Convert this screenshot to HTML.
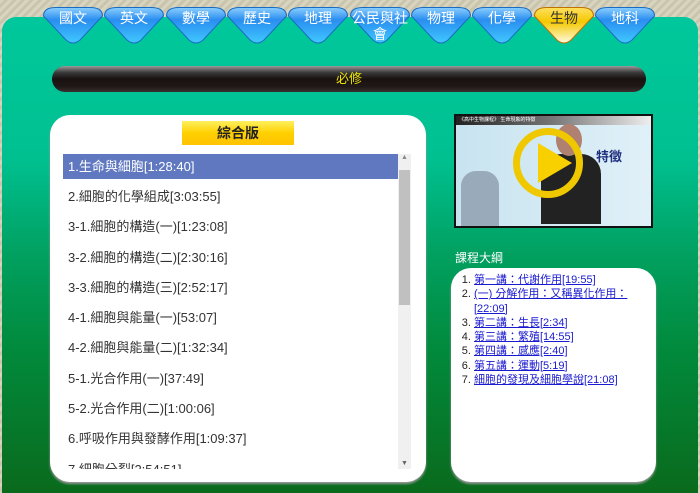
<!DOCTYPE html>
<html><head><meta charset="utf-8"><style>
*{margin:0;padding:0;box-sizing:border-box}
body{width:700px;height:493px;overflow:hidden;position:relative;font-family:"Liberation Sans","Noto Sans CJK TC",sans-serif;background:repeating-linear-gradient(135deg,#d8d4c0 0 3px,#c9c5ad 3px 6px)}
#g{position:absolute;left:2px;top:17px;width:696px;height:476px;border-radius:14px 14px 0 0;background:linear-gradient(180deg,#00c89c 0%,#00c090 30%,#01a060 50%,#018a3c 70%,#0a6a1c 100%)}
.tab{position:absolute;top:6px;width:62px;height:40px;color:#fff;font-size:14px;text-align:center;line-height:16px}
.tab svg{position:absolute;left:0;top:0}
.tab span{position:relative;display:block;padding-top:4px}
.tab.on{color:#333}
#bar{position:absolute;left:52px;top:66px;width:594px;height:26px;border-radius:13px;background:linear-gradient(#9a9a9a,#3a3a3a 25%,#1a1010 50%,#201818 80%,#3a3030);color:#e8e000;font-size:13px;text-align:center;line-height:26px}
#lp{position:absolute;left:50px;top:115px;width:376px;height:367px;background:#fff;border-radius:20px;box-shadow:0 2px 2px #999}
#ttl{position:absolute;left:182px;top:121px;width:112px;height:24px;background:linear-gradient(#fff060,#ffd000 50%,#ffc400);text-align:center;font-weight:bold;font-size:14px;line-height:24px;color:#222}
#list{position:absolute;left:63px;top:154px;width:348px;height:315px;overflow:hidden;background:#fff}
.it{height:30.3px;line-height:26px;padding-left:5px;font-size:13px;color:#333}
.it.s{background:#6078c0;color:#fff;height:25px;line-height:25px;margin-bottom:5px}
#sb{position:absolute;left:398px;top:154px;width:13px;height:315px;background:#f0f0f0}
#th{position:absolute;left:399px;top:170px;width:11px;height:135px;background:#c0c0c0}
#vid{position:absolute;left:454px;top:114px;width:199px;height:114px;background:#111;padding:2px}
#vi{width:100%;height:100%;background:linear-gradient(90deg,#c8e4f0,#e0f0f8);position:relative;overflow:hidden}
#rb{position:absolute;left:451px;top:268px;width:205px;height:214px;background:#fff;border-radius:20px;box-shadow:0 2px 2px #999}
ol{position:absolute;left:474px;top:273px;width:180px;font-size:11px;line-height:14.3px;color:#222}
ol a{color:#1a1ad0;text-decoration:underline}
</style></head><body>
<svg width="0" height="0" style="position:absolute"><defs>
<linearGradient id="bl" x1="0" y1="0" x2="0" y2="1"><stop offset="0" stop-color="#8ccfff"/><stop offset=".35" stop-color="#2a8ef0"/><stop offset="1" stop-color="#40c8ff"/></linearGradient>
<linearGradient id="yl" x1="0" y1="0" x2="0" y2="1"><stop offset="0" stop-color="#ffe060"/><stop offset=".4" stop-color="#f4c800"/><stop offset="1" stop-color="#fffbe0"/></linearGradient>
</defs></svg>
<div id="g"></div>
<div class="tab" style="left:42px"><svg width="62" height="40"><path d="M1.5,10 Q1.5,1.5 14,1.5 L48,1.5 Q60.5,1.5 60.5,10 L38,34 Q31,40 24,34 Z" fill="url(#bl)" stroke="#1a6cc0"/></svg><span>國文</span></div>
<div class="tab" style="left:103px"><svg width="62" height="40"><path d="M1.5,10 Q1.5,1.5 14,1.5 L48,1.5 Q60.5,1.5 60.5,10 L38,34 Q31,40 24,34 Z" fill="url(#bl)" stroke="#1a6cc0"/></svg><span>英文</span></div>
<div class="tab" style="left:165px"><svg width="62" height="40"><path d="M1.5,10 Q1.5,1.5 14,1.5 L48,1.5 Q60.5,1.5 60.5,10 L38,34 Q31,40 24,34 Z" fill="url(#bl)" stroke="#1a6cc0"/></svg><span>數學</span></div>
<div class="tab" style="left:226px"><svg width="62" height="40"><path d="M1.5,10 Q1.5,1.5 14,1.5 L48,1.5 Q60.5,1.5 60.5,10 L38,34 Q31,40 24,34 Z" fill="url(#bl)" stroke="#1a6cc0"/></svg><span>歷史</span></div>
<div class="tab" style="left:287px"><svg width="62" height="40"><path d="M1.5,10 Q1.5,1.5 14,1.5 L48,1.5 Q60.5,1.5 60.5,10 L38,34 Q31,40 24,34 Z" fill="url(#bl)" stroke="#1a6cc0"/></svg><span>地理</span></div>
<div class="tab" style="left:349px"><svg width="62" height="40"><path d="M1.5,10 Q1.5,1.5 14,1.5 L48,1.5 Q60.5,1.5 60.5,10 L38,34 Q31,40 24,34 Z" fill="url(#bl)" stroke="#1a6cc0"/></svg><span>公民與社<br>會</span></div>
<div class="tab" style="left:410px"><svg width="62" height="40"><path d="M1.5,10 Q1.5,1.5 14,1.5 L48,1.5 Q60.5,1.5 60.5,10 L38,34 Q31,40 24,34 Z" fill="url(#bl)" stroke="#1a6cc0"/></svg><span>物理</span></div>
<div class="tab" style="left:471px"><svg width="62" height="40"><path d="M1.5,10 Q1.5,1.5 14,1.5 L48,1.5 Q60.5,1.5 60.5,10 L38,34 Q31,40 24,34 Z" fill="url(#bl)" stroke="#1a6cc0"/></svg><span>化學</span></div>
<div class="tab on" style="left:533px"><svg width="62" height="40"><path d="M1.5,10 Q1.5,1.5 14,1.5 L48,1.5 Q60.5,1.5 60.5,10 L38,34 Q31,40 24,34 Z" fill="url(#yl)" stroke="#c07000"/></svg><span>生物</span></div>
<div class="tab" style="left:594px"><svg width="62" height="40"><path d="M1.5,10 Q1.5,1.5 14,1.5 L48,1.5 Q60.5,1.5 60.5,10 L38,34 Q31,40 24,34 Z" fill="url(#bl)" stroke="#1a6cc0"/></svg><span>地科</span></div>
<div id="bar">必修</div>
<div id="lp"></div>
<div id="ttl">綜合版</div>
<div id="list">
<div class="it s">1.生命與細胞[1:28:40]</div>
<div class="it">2.細胞的化學組成[3:03:55]</div>
<div class="it">3-1.細胞的構造(一)[1:23:08]</div>
<div class="it">3-2.細胞的構造(二)[2:30:16]</div>
<div class="it">3-3.細胞的構造(三)[2:52:17]</div>
<div class="it">4-1.細胞與能量(一)[53:07]</div>
<div class="it">4-2.細胞與能量(二)[1:32:34]</div>
<div class="it">5-1.光合作用(一)[37:49]</div>
<div class="it">5-2.光合作用(二)[1:00:06]</div>
<div class="it">6.呼吸作用與發酵作用[1:09:37]</div>
<div class="it">7.細胞分裂[2:54:51]</div>
</div>
<div id="sb"><div style="font-size:7px;color:#888;text-align:center">▲</div><div style="position:absolute;bottom:2px;width:13px;font-size:7px;color:#666;text-align:center">▼</div></div>
<div id="th"></div>
<div id="vid"><div id="vi">
<div style="position:absolute;left:0;top:0;width:100%;height:9px;background:linear-gradient(90deg,#222,#777,#eee);font-size:5px;color:#fff;line-height:9px;padding-left:3px">《高中生物課程》 生命現象的特徵</div>
<div style="position:absolute;left:5px;top:55px;width:38px;height:55px;background:#9ab;border-radius:15px 15px 0 0"></div>
<div style="position:absolute;left:85px;top:38px;width:60px;height:70px;background:#222;border-radius:20px 20px 0 0"></div>
<div style="position:absolute;left:100px;top:8px;width:26px;height:32px;background:#b08070;border-radius:50%"></div>
<div style="position:absolute;left:57px;top:12px;width:70px;height:70px;border:7px solid #f0c800;border-radius:50%"></div>
<div style="position:absolute;left:82px;top:27px;width:0;height:0;border-left:34px solid #f8d000;border-top:20px solid transparent;border-bottom:20px solid transparent"></div>
<div style="position:absolute;left:140px;top:30px;font-size:13px;font-weight:bold;color:#203080">特徵</div>
</div></div>
<div style="position:absolute;left:455px;top:249px;color:#fff;font-size:12px">課程大綱</div>
<div id="rb"></div>
<ol>
<li><a>第一講：代謝作用[19:55]</a></li>
<li><a>(一) 分解作用：又稱異化作用：[22:09]</a></li>
<li><a>第二講：生長[2:34]</a></li>
<li><a>第三講：繁殖[14:55]</a></li>
<li><a>第四講：感應[2:40]</a></li>
<li><a>第五講：運動[5:19]</a></li>
<li><a>細胞的發現及細胞學說[21:08]</a></li>
</ol>
</body></html>
